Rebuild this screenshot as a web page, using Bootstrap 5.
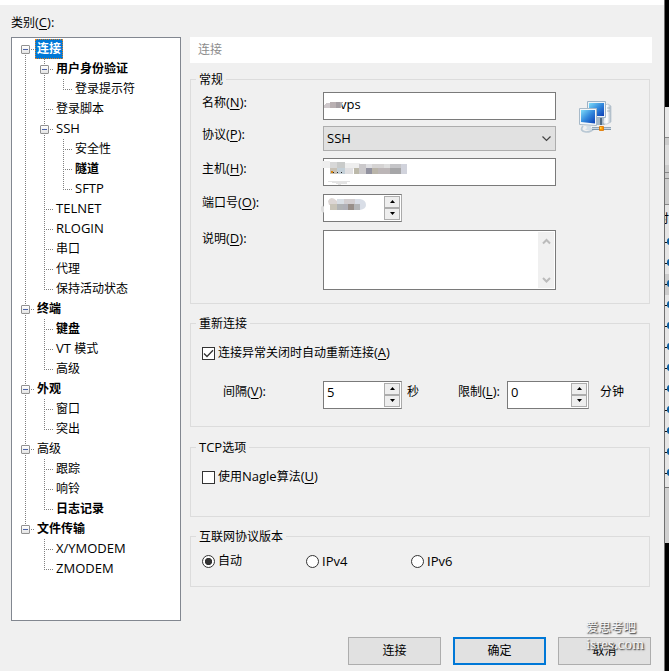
<!DOCTYPE html>
<html lang="zh-CN">
<head>
<meta charset="utf-8">
<meta name="viewport" content="width=device-width, initial-scale=1">
<title>连接</title>
<link href="https://cdn.jsdelivr.net/npm/bootstrap@5.3.0/dist/css/bootstrap.min.css" rel="stylesheet">
<style>
  html, body { height: 671px; overflow: hidden; }
  body { font: 12px/16px "Open Sans", "Noto Sans CJK SC", sans-serif; color: #000; background: #fff; }
  i { font-style: normal; font-size: 13px; line-height: 1; }
  u { text-underline-offset: 2px; text-decoration-thickness: 1px; }
  .window-row { height: 671px; }
  .dialog { width: 664px; border-top: 5px solid #fff; background: #f0f0f0; }

  /* category tree */
  .side { width: 170px; margin: 10px 9px 0 11px; }
  .side-title { height: 22px; }
  .tree { height: 584px; border: 1px solid #828790; background: #fff; padding: 1px 0 0 4px; }
  .node { height: 20px; line-height: 20px; white-space: nowrap; }
  .node > span { padding-left: 2px; height: 20px; }
  .node b { font-weight: 700; }
  .node .picked { background: #0078d7; color: #fff; outline: 1px dotted #e08020; outline-offset: -1px; width: 28px; }
  .c { width: 19px; flex: none; background-repeat: no-repeat; --v: repeating-linear-gradient(#808080 0 1px, transparent 1px 2px); --h: repeating-linear-gradient(90deg, #808080 0 1px, transparent 1px 2px); }
  .v { background-image: var(--v); background-size: 1px 20px; background-position: 9px 0; }
  .t { background-image: var(--v), var(--h); background-size: 1px 20px, 9px 1px; background-position: 9px 0, 9px 10px; }
  .l { background-image: var(--v), var(--h); background-size: 1px 10px, 9px 1px; background-position: 9px 0, 9px 10px; }
  .first { background-image: var(--v), var(--h); background-size: 1px 10px, 9px 1px; background-position: 9px 10px, 9px 10px; }
  .box::before { content: ""; display: block; width: 9px; height: 9px; margin: 6px 0 0 5px; border: 1px solid #919191; border-radius: 1px; background: linear-gradient(#4b63a7, #4b63a7) center/5px 1px no-repeat, linear-gradient(#fff, #e4e4e4); }

  /* settings groups */
  .main { width: 462px; margin-top: 32px; }
  .heading { height: 26px; line-height: 25px; padding-left: 8px; background: #fff; color: #8c8c8c; }
  .group { width: 460px; border: 1px solid #dcdcdc; padding-left: 11px; }
  .caption { height: 16px; margin: -8px 0 0 -6px; padding: 0 3px; background: #f0f0f0; width: max-content; }
  .g1 { height: 225px; margin-top: 16px; }
  .g2 { height: 104px; margin-top: 19px; }
  .g3 { height: 70px; margin-top: 20px; }
  .g4 { height: 51px; margin-top: 19px; }
  .fields { margin-top: 4px; }
  .lab { width: 121px; flex: none; padding-top: 1px; }
  .lab-low { padding-top: 3px; }
  .name-row { margin-bottom: 6px; }
  .proto-row { margin-bottom: 7px; }
  .host-row, .port-row { margin-bottom: 8px; }
  .field { width: 233px; height: 28px; border: 1px solid #7a7a7a; background: #fff; padding-left: 3px; line-height: 24px; }
  .typed { margin-left: 13px; }
  .combo { height: 25px; border-color: #adadad; background: #e1e1e1; }
  .memo { height: 60px; padding: 1px; }
  .scroller { width: 16px; background: #f0f0f0; padding: 6px 0 4px; }
  .spin { width: 79px; border-right-color: #aaa; padding-right: 1px; }
  .steps { width: 16px; margin: 1px 0; background: #f0f0f0; }
  .step { height: 12px; border: 1px solid #adadad; background: #eee; padding-top: 3px; }
  .num { line-height: 21px; }
  .mosaic { left: -3px; top: -1px; }
  .net-icon { margin: 7px 0 0 22px; }
  .check { width: 13px; height: 13px; border: 1px solid #333; background: #fff; flex: none; }
  .on { background: radial-gradient(circle, #333 0 3.3px, #fff 4px); }
  .opt { gap: 3px; height: 16px; }
  .lone { margin-top: 13px; }
  .retry { margin-top: 20px; padding-left: 21px; }
  .r-lab, .r-sec, .r-lim, .r-min { flex: none; padding-top: 3px; }
  .r-lab { width: 100px; }
  .r-sec { width: 56px; padding-left: 5px; }
  .r-lim { width: 49px; }
  .r-min { padding-left: 11px; }
  .limit { width: 82px; }
  .versions { margin-top: 8px; }
  .versions .opt { width: 105px; }
  .versions .opt:first-child { width: 104px; }
  .actions { gap: 12px; margin: 50px 0 0 158px; }
  .action { width: 93px; height: 28px; padding: 0; border: 1px solid #adadad; border-radius: 0; background: #e1e1e1; color: #000; font-size: 12px; line-height: 26px; }
  .main-action { border: 2px solid #0078d7; line-height: 24px; }
  .stamp { left: 586px; top: 620px; width: 66px; color: #f8f8f8; font: 12.5px/17px "Liberation Serif", "Noto Sans CJK SC", serif; text-shadow: 1px 1px 1px #555, 1px 1px 2px #777; }
  .stamp .site { font-size: 15px; line-height: 14px; letter-spacing: .1px; }

  /* strip of the window behind */
  .edge { width: 5px; border-left: 1px solid #707070; background: #e5e5e5; }
  .sky { height: 107px; background: #000; flex: none; }
  .bars { height: 98px; background: linear-gradient(#e8e8e8 30px, #888 30px 31px, #ccc 31px 38px, #ddd 38px 58px, #ccc 58px 65px, #888 65px 66px, #ccc 66px 71px, #888 71px 72px, #ccc 72px 97px, #888 97px); }
  .title-bit { height: 27px; line-height: 28px; margin-left: -8px; }
  .cell { height: 21px; padding: 6px 0 0 2px; background: linear-gradient(#111, #111) 0 10px/2px 1px no-repeat; }
  .cell::before { content: ""; display: block; width: 6px; height: 7px; border: 2px solid #075ca0; border-radius: 3px; }
  .hot { background-color: #ccc; }
  .rest { height: 59px; border-top: 3px solid #e5e5e5; background: linear-gradient(#777 1px, #d0d0d0 1px); }
</style>
<script src="https://cdn.jsdelivr.net/npm/bootstrap@5.3.0/dist/js/bootstrap.bundle.min.js"></script>
</head>
<body>
<div class="window-row d-flex position-relative overflow-hidden">
  <div class="dialog d-flex align-items-start flex-shrink-0">
    <div class="side flex-shrink-0">
      <div class="side-title">类别<i>(<u>C</u>):</i></div>
      <div class="tree">
        <div class="node d-flex"><div class="c first box"></div><span class="picked"><b>连接</b></span></div>
        <div class="node d-flex"><div class="c v"></div><div class="c t box"></div><span><b>用户身份验证</b></span></div>
        <div class="node d-flex"><div class="c v"></div><div class="c v"></div><div class="c l"></div><span>登录提示符</span></div>
        <div class="node d-flex"><div class="c v"></div><div class="c t"></div><span>登录脚本</span></div>
        <div class="node d-flex"><div class="c v"></div><div class="c t box"></div><span><i>SSH</i></span></div>
        <div class="node d-flex"><div class="c v"></div><div class="c v"></div><div class="c t"></div><span>安全性</span></div>
        <div class="node d-flex"><div class="c v"></div><div class="c v"></div><div class="c t"></div><span><b>隧道</b></span></div>
        <div class="node d-flex"><div class="c v"></div><div class="c v"></div><div class="c l"></div><span><i>SFTP</i></span></div>
        <div class="node d-flex"><div class="c v"></div><div class="c t"></div><span><i>TELNET</i></span></div>
        <div class="node d-flex"><div class="c v"></div><div class="c t"></div><span><i>RLOGIN</i></span></div>
        <div class="node d-flex"><div class="c v"></div><div class="c t"></div><span>串口</span></div>
        <div class="node d-flex"><div class="c v"></div><div class="c t"></div><span>代理</span></div>
        <div class="node d-flex"><div class="c v"></div><div class="c l"></div><span>保持活动状态</span></div>
        <div class="node d-flex"><div class="c t box"></div><span><b>终端</b></span></div>
        <div class="node d-flex"><div class="c v"></div><div class="c t"></div><span><b>键盘</b></span></div>
        <div class="node d-flex"><div class="c v"></div><div class="c t"></div><span><i>VT </i>模式</span></div>
        <div class="node d-flex"><div class="c v"></div><div class="c l"></div><span>高级</span></div>
        <div class="node d-flex"><div class="c t box"></div><span><b>外观</b></span></div>
        <div class="node d-flex"><div class="c v"></div><div class="c t"></div><span>窗口</span></div>
        <div class="node d-flex"><div class="c v"></div><div class="c l"></div><span>突出</span></div>
        <div class="node d-flex"><div class="c t box"></div><span>高级</span></div>
        <div class="node d-flex"><div class="c v"></div><div class="c t"></div><span>跟踪</span></div>
        <div class="node d-flex"><div class="c v"></div><div class="c t"></div><span>响铃</span></div>
        <div class="node d-flex"><div class="c v"></div><div class="c l"></div><span><b>日志记录</b></span></div>
        <div class="node d-flex"><div class="c l box"></div><span><b>文件传输</b></span></div>
        <div class="node d-flex"><div class="c"></div><div class="c t"></div><span><i>X/YMODEM</i></span></div>
        <div class="node d-flex"><div class="c"></div><div class="c l"></div><span><i>ZMODEM</i></span></div>
      </div>
    </div>

    <div class="main flex-shrink-0">
      <div class="heading">连接</div>

      <section class="group g1">
        <div class="caption">常规</div>
        <div class="fields d-flex">
          <div>
            <div class="name-row d-flex"><div class="lab lab-low">名称<i>(<u>N</u>):</i></div>
              <div class="field position-relative"><i class="typed">vps</i>
                <svg class="mosaic position-absolute" width="34" height="28" shape-rendering="crispEdges"><path d="M3 13 5 11h4v5H3z" fill="#cfc9cc"/><path d="M9 10h6v6H9z" fill="#b9b0b2"/><path d="M15 10h5v6h-5z" fill="#a59fa3"/><path d="M19 10h3l-2 6h-1z" fill="#b0abae"/></svg>
              </div></div>
            <div class="proto-row d-flex"><div class="lab">协议<i>(<u>P</u>):</i></div>
              <div class="field combo d-flex justify-content-between align-items-center pe-1"><i>SSH</i><svg width="9" height="6" fill="none" stroke="#444" stroke-width="1.2"><path d="M.5.5 4.5 4.5 8.5.5"/></svg></div></div>
            <div class="host-row d-flex"><div class="lab lab-low">主机<i>(<u>H</u>):</i></div>
              <div class="field position-relative">
                <svg class="mosaic position-absolute" width="90" height="29" shape-rendering="crispEdges"><path d="M1 3h8v7H1z" fill="#eee"/><path d="M9 4h7v6H9z" fill="#d8d8d8"/><path d="M16 4h8v6h-8z" fill="#c9cbca"/><path d="M24 5h15v6H24z" fill="#eee"/><path d="M9 10h7v6H9z" fill="#c9c2b6"/><path d="M16 10h8v6h-8z" fill="#c4d0d8"/><path d="M24 10h8v6h-8z" fill="#e1e0e2"/><path d="M33 10h5v6h-5z" fill="#bcb9aa"/><path d="M38 6h7v10h-7z" fill="#cbc9cb"/><path d="M45 6h6v4h-6z" fill="#e0e0e3"/><path d="M45 10h6v6h-6z" fill="#92929f"/><path d="M51 6h12v6H51z" fill="#d5d3d3"/><path d="M51 10h6v6h-6z" fill="#bab5aa"/><path d="M57 10h12v6H57z" fill="#bcb6b7"/><path d="M63 6h6v4h-6z" fill="#dedede"/><path d="M69 6h11v10H69z" fill="#c5c5c8"/><path d="M69 10h11v6H69z" fill="#a6a6a8"/><path d="M80 6h6v10h-6z" fill="#d1d3dc"/><path d="M10 13h2v2h-2z" fill="#d58510"/><path d="M12 14h1v1h-1zM16 14h1v1h-1zM20 14h1v1h-1z" fill="#222"/><path d="M7 23h25l-6 1v2h-4l-4 1-4-2-7-1z" fill="#e3e3e3"/></svg>
              </div></div>
            <div class="port-row d-flex"><div class="lab">端口号<i>(<u>O</u>):</i></div>
              <div class="field spin position-relative d-flex justify-content-between"><span></span><div class="steps"><div class="step"><svg class="d-block mx-auto" width="5" height="3"><path d="M0 3 2.5 0 5 3z"/></svg></div><div class="step"><svg class="d-block mx-auto" width="5" height="3"><path d="M0 0 2.5 3 5 0z"/></svg></div></div>
                <svg class="mosaic position-absolute" width="48" height="28"><path d="M0 13q2-3 3 0v5q-2 2-3-2z" fill="#ddd"/><path d="M7 7q3-6 9 0v4H8z" fill="#dcd6d4"/><path d="M16 5h7v5h-7z" fill="#d9dfe5"/><path d="M23 5h11v5H23z" fill="#d2ced0"/><path d="M34 5h5q6 1 6 6 0 4-6 5h-5z" fill="#d9dee7"/><path d="M9 10h7v6H9z" fill="#c8c4b8"/><path d="M16 10h6v6h-6z" fill="#b0b3b5"/><path d="M22 10h5v6h-5z" fill="#afb0b7"/><path d="M27 10h6v6h-6z" fill="#988f89"/><path d="M33 10h6v6h-6z" fill="#b4b6b8"/></svg>
              </div></div>
            <div class="d-flex"><div class="lab">说明<i>(<u>D</u>):</i></div>
              <div class="field memo d-flex justify-content-end"><div class="scroller d-flex flex-column justify-content-between align-items-center"><svg width="9" height="7" fill="none" stroke="#bbb" stroke-width="2"><path d="M1 5.5 4.5 2 8 5.5"/></svg><svg width="9" height="7" fill="none" stroke="#bbb" stroke-width="2"><path d="M1 1 4.5 4.5 8 1"/></svg></div></div></div>
          </div>
          <svg class="net-icon" width="34" height="34" viewBox="0 0 34 34">
            <defs><linearGradient id="scr" x2="1" y2="1"><stop stop-color="#7edcf8"/><stop offset=".5" stop-color="#3187dc"/><stop offset="1" stop-color="#0b3eb5"/></linearGradient><linearGradient id="pc"><stop stop-color="#dbe4ec"/><stop offset=".5" stop-color="#fff"/><stop offset="1" stop-color="#aab9c6"/></linearGradient></defs>
            <path d="M27 6l3-1 3 2v16l-4 2h-4z" fill="url(#pc)" stroke="#b2c0cc" stroke-width=".7"/><path d="M29 9h3m-3 3h3" stroke="#8ea0ae" stroke-width=".7"/>
            <path d="M19 19h7l-1 4 2 3h-9z" fill="#a5b7c7"/><path d="M22 19h2v7h-2z" fill="#526c84"/>
            <path d="M9.5 2.5h18v16h-18z" fill="#edf3f8" stroke="#9db2c5"/><path d="M11 4h15v13H11z" fill="url(#scr)"/>
            <path d="M5 27q-4 5 3 6 6 0 8-4" fill="none" stroke="#b9c8d4" stroke-width="1.7"/><path d="M8 27h5v2h3v2H7l2-2z" fill="#d5dfe7"/>
            <path d="M1.5 9.5h17v17l-17-1z" fill="#f3f7fa" stroke="#a8bac9"/><path d="M3 11h14v13.5L3 23z" fill="url(#scr)"/>
            <path d="M14 29.5h19" stroke="#8197a9" stroke-width="3"/><path d="M14 29.3h19" stroke="#dbe7ef"/><path d="M21.5 27.5h4v4h-4z" fill="#ff9500" stroke="#da7400" stroke-width=".8"/><path d="M22 28h1.5v2H22z" fill="#ffd340"/>
          </svg>
        </div>
      </section>

      <section class="group g2">
        <div class="caption">重新连接</div>
        <div class="opt lone d-flex align-items-center"><span class="check"><svg class="d-block" width="11" height="11" fill="none" stroke="#333" stroke-width="1.3"><path d="M1 5.5 4 8.5 10 2.2"/></svg></span><span>连接异常关闭时自动重新连接<i>(<u>A</u>)</i></span></div>
        <div class="retry d-flex">
          <div class="r-lab">间隔<i>(<u>V</u>):</i></div>
          <div class="field spin d-flex justify-content-between"><i class="num">5</i><div class="steps"><div class="step"><svg class="d-block mx-auto" width="5" height="3"><path d="M0 3 2.5 0 5 3z"/></svg></div><div class="step"><svg class="d-block mx-auto" width="5" height="3"><path d="M0 0 2.5 3 5 0z"/></svg></div></div></div>
          <div class="r-sec">秒</div><div class="r-lim">限制<i>(<u>L</u>):</i></div>
          <div class="field spin limit d-flex justify-content-between"><i class="num">0</i><div class="steps"><div class="step"><svg class="d-block mx-auto" width="5" height="3"><path d="M0 3 2.5 0 5 3z"/></svg></div><div class="step"><svg class="d-block mx-auto" width="5" height="3"><path d="M0 0 2.5 3 5 0z"/></svg></div></div></div>
          <div class="r-min">分钟</div>
        </div>
      </section>

      <section class="group g3">
        <div class="caption"><i>TCP</i>选项</div>
        <div class="opt lone d-flex align-items-center"><span class="check"></span><span>使用<i>Nagle</i>算法<i>(<u>U</u>)</i></span></div>
      </section>

      <section class="group g4">
        <div class="caption">互联网协议版本</div>
        <div class="versions d-flex">
          <div class="opt d-flex align-items-center"><span class="check rounded-circle on"></span>自动</div>
          <div class="opt d-flex align-items-center"><span class="check rounded-circle"></span><i>IPv4</i></div>
          <div class="opt d-flex align-items-center"><span class="check rounded-circle"></span><i>IPv6</i></div>
        </div>
      </section>

      <div class="actions d-flex">
        <button class="btn action">连接</button><button class="btn action main-action">确定</button><button class="btn action">取消</button>
      </div>
    </div>
  </div>

  <div class="edge overflow-hidden flex-shrink-0">
    <div class="sky"></div><div class="bars"></div>
    <div class="title-bit">时</div>
    <div class="cell"></div><div class="cell"></div><div class="cell hot"></div><div class="cell"></div><div class="cell"></div><div class="cell"></div><div class="cell"></div><div class="cell"></div><div class="cell"></div><div class="cell"></div><div class="cell"></div><div class="cell"></div>
    <div class="rest"></div><div class="sky h-100"></div>
  </div>
  <div class="stamp position-absolute">爱思考吧<div class="site">isres.com</div></div>
</div>
</body>
</html>
